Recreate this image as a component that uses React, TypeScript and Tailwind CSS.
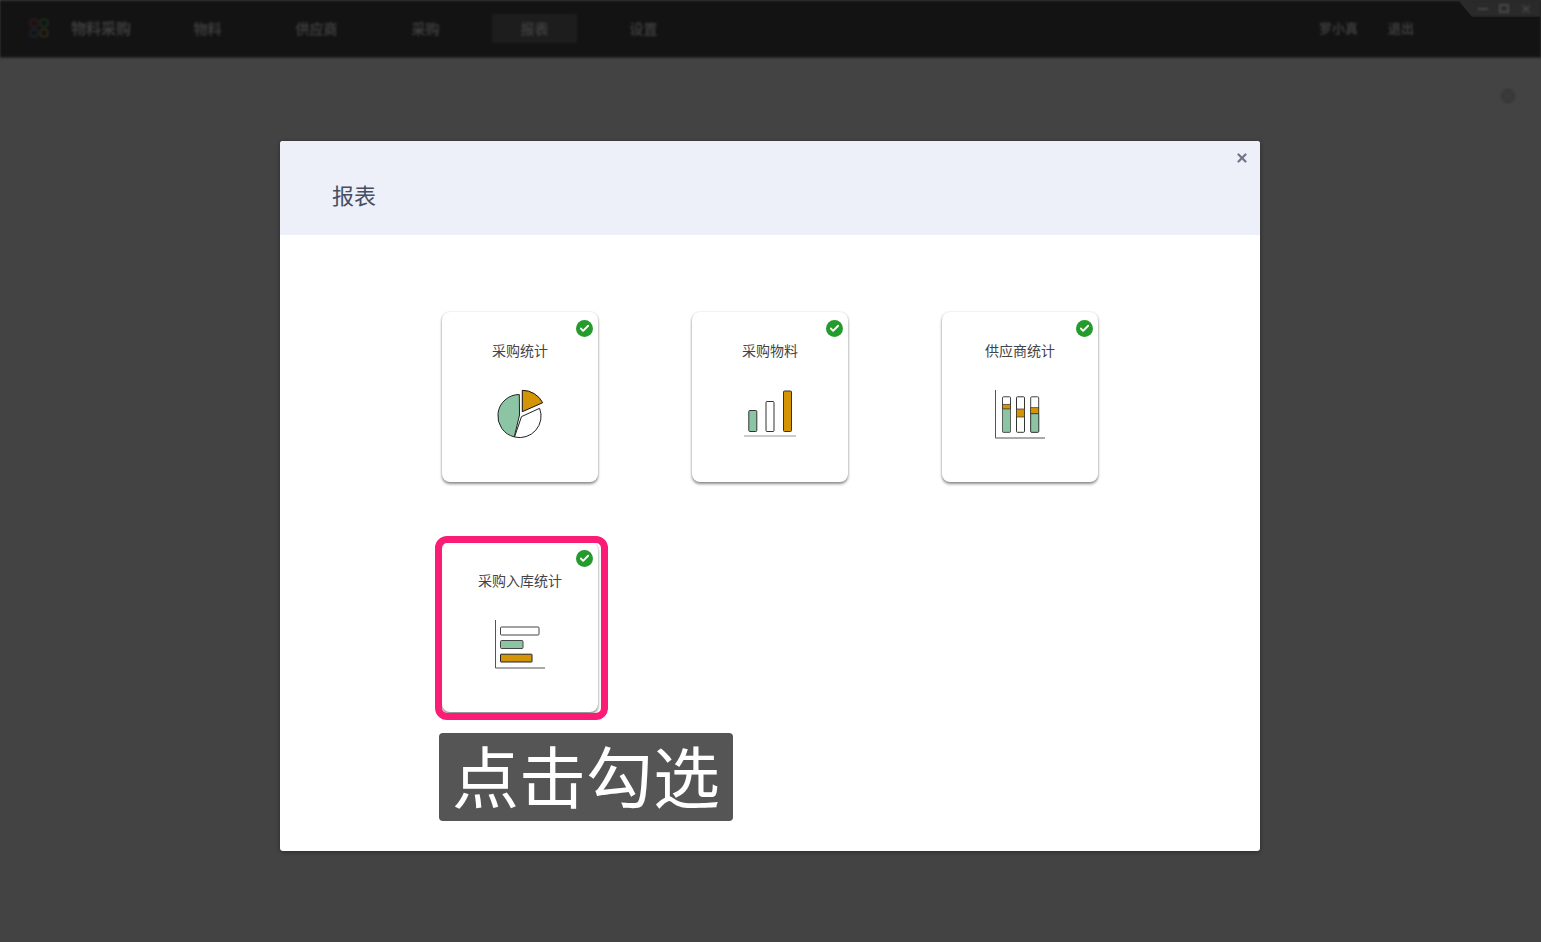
import { Check, X } from 'lucide-react';

const font = { fontFamily: '"Noto Sans CJK SC", "Noto Sans", sans-serif' };

const navItems = [
    { label: '物料' },
    { label: '供应商' },
    { label: '采购' },
    { label: '报表', active: true },
    { label: '设置' },
];

const PieIcon = () => (
    <svg width="50" height="52" viewBox="0 0 50 52" fill="none" stroke="#222" strokeWidth="1">
        <path d="M24.3 5.5 A21.5 21.5 0 0 0 19.3 47.9 L24.5 26 Z" fill="#8cc5a4" />
        <path d="M26.5 27.6 L44.6 19.3 A21.5 21.5 0 0 1 19.5 48 Z" fill="#fff" />
        <path d="M27.3 22.7 V1.3 A23 23 0 0 1 47.7 13.7 Z" fill="#d39405" stroke="#111" />
    </svg>
);

const BarsIcon = () => (
    <svg width="54" height="50" viewBox="0 -0.5 54 50" fill="none">
        <rect x="5.8" y="21" width="8" height="21" rx="1" fill="#8cc5a4" stroke="#333" />
        <rect x="23" y="12" width="8" height="30" rx="1" fill="#fff" stroke="#333" />
        <rect x="40.5" y="1.5" width="8" height="40.5" rx="1" fill="#d39405" stroke="#333" />
        <path d="M1 46.5 H53" stroke="#bbb" strokeWidth="1.4" />
    </svg>
);

const StackIcon = () => (
    <svg width="52" height="50" viewBox="0 -1 52 50" fill="none">
        <path d="M1.5 0 V48 H51" stroke="#555" strokeWidth="1" />
        <rect x="8.5" y="6.8" width="8" height="35.5" rx="1" fill="#fff" stroke="#444" />
        <rect x="8.5" y="14.3" width="8" height="4.7" fill="#d39405" stroke="#333" strokeWidth="0.7" />
        <rect x="8.5" y="19" width="8" height="23.3" rx="1" fill="#8cc5a4" stroke="#555" strokeWidth="0.8" />
        <rect x="22.5" y="6.8" width="8" height="35.5" rx="1" fill="#fff" stroke="#333" />
        <rect x="22.5" y="19" width="8" height="8" fill="#d39405" stroke="#333" strokeWidth="0.7" />
        <rect x="36.7" y="6.8" width="8" height="35.5" rx="1" fill="#fff" stroke="#444" />
        <rect x="36.7" y="17.7" width="8" height="6" fill="#d39405" stroke="#333" strokeWidth="0.7" />
        <rect x="36.7" y="23.7" width="8" height="18.6" rx="1" fill="#8cc5a4" stroke="#333" strokeWidth="0.8" />
    </svg>
);

const HBarIcon = () => (
    <svg width="52" height="50" viewBox="0 -1 52 50" fill="none">
        <path d="M1.5 0 V48 H51" stroke="#555" strokeWidth="1" />
        <rect x="6.5" y="7" width="38.5" height="8" rx="1" fill="#fff" stroke="#444" />
        <rect x="6.5" y="20.5" width="22.5" height="8" rx="1" fill="#8cc5a4" stroke="#444" />
        <rect x="6.5" y="34.2" width="31.5" height="7.8" rx="0.5" fill="#d39405" stroke="#222" />
    </svg>
);

const reports = [
    { title: '采购统计', icon: <PieIcon /> },
    { title: '采购物料', icon: <BarsIcon /> },
    { title: '供应商统计', icon: <StackIcon /> },
    { title: '采购入库统计', icon: <HBarIcon /> },
];

const ReportCard = ({ title, icon }: { title: string; icon: React.ReactNode }) => (
    <div className="relative flex h-[170px] w-[156px] flex-col items-center rounded-lg bg-white pt-[28px] shadow-[0_2px_3px_rgba(0,0,0,0.45),0_0_2px_rgba(0,0,0,0.12)]">
        <div className="absolute right-[5px] top-[8px] flex h-[17px] w-[17px] items-center justify-center rounded-full bg-[#249c2c]">
            <Check size={11} strokeWidth={4} color="#fff" />
        </div>
        <div className="text-[14px] leading-[20px] text-[#444]">{title}</div>
        <div className="mt-[29px]">{icon}</div>
    </div>
);

export default function App() {
    return (
        <div className="relative h-[942px] w-full overflow-hidden bg-[#434343]" style={font}>
            <div className="flex h-[58px] items-center border-y border-[#2a2a2a] bg-[#131313] pb-[2px] text-[14px] font-bold text-[#3c3c3c] blur-[1.2px]">
                <div className="ml-[30px] grid h-[18px] w-[18px] grid-cols-2 gap-[2px]">
                    <span className="rounded-[2px] border border-[#4a1c1c]" />
                    <span className="rounded-[2px] border border-[#1c4424]" />
                    <span className="rounded-[2px] border border-[#1c2f4a]" />
                    <span className="rounded-[2px] border border-[#4a3a14]" />
                </div>
                <span className="ml-[23px] w-[72px] text-[15px]">物料采购</span>
                <div className="ml-[10px] flex items-center">
                    {navItems.map((item) => (
                        <div key={item.label} className="flex h-[29px] w-[109px] items-center justify-center">
                            <span className={`flex h-[29px] w-[85px] items-center justify-center ${item.active ? 'bg-[#1d1d1d]' : ''}`}>
                                {item.label}
                            </span>
                        </div>
                    ))}
                </div>
                <div className="ml-auto mr-[127px] flex gap-[30px] text-[13px]">
                    <span>罗小真</span>
                    <span>退出</span>
                </div>
            </div>

            <div className="absolute right-0 top-0 flex h-[17px] w-[83px] items-center justify-end gap-[11px] bg-[#2a2a2a] pr-[9px] text-[#484848] blur-[0.8px] [clip-path:polygon(0_0,100%_0,100%_100%,17%_100%)]">
                <span className="h-[2px] w-[10px] bg-[#484848]" />
                <span className="h-[9px] w-[10px] border-2 border-[#484848]" />
                <X size={12} strokeWidth={3} />
            </div>

            <div className="absolute right-[26px] top-[89px] h-[14px] w-[14px] rounded-full border border-[#333] bg-[#3a3a3a] blur-[0.8px]" />

            <div className="absolute left-[280px] top-[141px] h-[710px] w-[980px] overflow-hidden rounded-[3px] bg-white shadow-[0_1px_4px_rgba(0,0,0,0.4)]">
                <div className="relative flex h-[94px] items-center bg-[#edf0f8] pl-[52px] pt-[12px]">
                    <span className="text-[22px] text-[#474d63]">报表</span>
                    <X className="absolute right-[11px] top-[10px]" size={14} strokeWidth={4} color="#72788c" />
                </div>
                <div className="ml-[162px] mt-[77px] grid grid-cols-[156px_156px_156px] gap-x-[94px] gap-y-[60px]">
                    {reports.map((report) => (
                        <ReportCard key={report.title} {...report} />
                    ))}
                </div>
            </div>

            <div className="absolute left-[435px] top-[536px] h-[184px] w-[173px] rounded-[12px] border-[7px] border-[#fb1c76]" />

            <div className="absolute left-[439px] top-[733px] flex h-[88px] w-[294px] items-center justify-center rounded-[4px] bg-[#555555] pb-[8px] text-[67px] leading-none text-white">
                点击勾选
            </div>
        </div>
    );
}
